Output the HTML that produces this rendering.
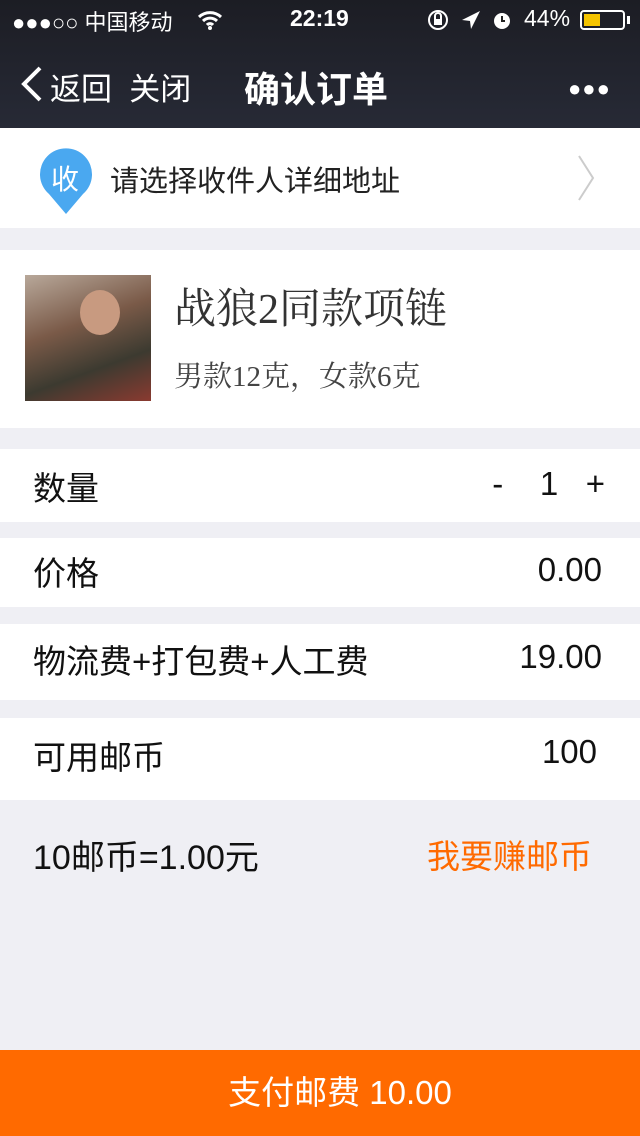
<!DOCTYPE html>
<html><head><meta charset="utf-8"><style>
*{margin:0;padding:0;box-sizing:border-box}
body{width:640px;height:1136px;background:#efeff4;font-family:"Liberation Sans","Noto Sans CJK SC",sans-serif;position:relative;overflow:hidden;color:#111}
.abs{position:absolute}
.hdr{left:0;top:0;width:640px;height:128px;background:linear-gradient(#1c1d24,#272a36);color:#fff}
.row{left:0;width:640px;background:#fff}
.lbl{position:absolute;left:33px;font-size:33px}
.val{position:absolute;right:38px;font-size:33px}
.serif{font-family:"Liberation Serif","Noto Serif CJK SC",serif}
</style></head><body>
<div class="abs hdr">
 <div class="abs" style="left:12px;top:5px;font-size:22px">●●●○○ 中国移动</div>
 <svg class="abs" style="left:197px;top:10px" width="26" height="20" viewBox="0 0 26 20"><path d="M2 7a16 16 0 0 1 22 0M6 11a10 10 0 0 1 14 0M10 15a4 4 0 0 1 6 0" stroke="#fff" stroke-width="3" fill="none"/><circle cx="13" cy="18" r="2" fill="#fff"/></svg>
 <div class="abs" style="left:290px;top:5px;font-size:23px;font-weight:bold">22:19</div>
 <svg class="abs" style="left:426px;top:8px" width="90" height="24" viewBox="0 0 90 24"><circle cx="12" cy="12" r="9" stroke="#fff" stroke-width="2" fill="none"/><rect x="8" y="11" width="8" height="6" fill="#fff"/><path d="M9 11V8a3 3 0 0 1 6 0v3" stroke="#fff" stroke-width="2" fill="none"/><path d="M54 3L36 12l8 1 1 8z" fill="#fff"/><circle cx="76" cy="13" r="8" fill="#fff"/><path d="M76 8v5h3" stroke="#222" stroke-width="2" fill="none"/></svg>
 <div class="abs" style="left:524px;top:5px;font-size:23px">44%</div>
 <div class="abs" style="left:580px;top:10px;width:45px;height:20px;border:2px solid #fff;border-radius:4px"><div style="margin:2px;width:16px;height:12px;background:#f5c400"></div></div>
 <div class="abs" style="left:627px;top:16px;width:3px;height:8px;background:#fff"></div>
 <svg class="abs" style="left:20px;top:66px" width="24" height="36" viewBox="0 0 24 36"><path d="M20 2L4 18l16 16" stroke="#fff" stroke-width="4" fill="none"/></svg>
 <div class="abs" style="left:50px;top:64px;font-size:31px">返回&nbsp; 关闭</div>
 <div class="abs" style="left:244px;top:61px;font-size:36px;font-weight:bold">确认订单</div>
 <div class="abs" style="left:568px;top:76px;font-size:22px;letter-spacing:1px">●●●</div>
</div>
<div class="abs row" style="top:128px;height:100px">
 <svg class="abs" style="left:39px;top:20px" width="54" height="68" viewBox="0 0 54 68"><path d="M27 66L10 46A26 26 0 1 1 44 46Z" fill="#4aa8f0"/></svg>
 <div class="abs" style="left:51px;top:30px;font-size:28px;color:#fff">收</div>
 <div class="abs" style="left:110px;top:30px;font-size:29px;color:#222">请选择收件人详细地址</div>
 <svg class="abs" style="left:576px;top:26px" width="20" height="48" viewBox="0 0 20 48"><path d="M3 2l14 22L3 46" stroke="#ccc" stroke-width="2" fill="none"/></svg>
</div>
<div class="abs row" style="top:250px;height:178px">
 <div class="abs" style="left:25px;top:25px;width:126px;height:126px;background:linear-gradient(160deg,#b8a89a,#7a5a48 40%,#3c3a30 70%,#8a3a30)"></div>
 <div class="abs" style="left:80px;top:40px;width:40px;height:45px;border-radius:50%;background:#c89a80"></div>
 <div class="abs serif" style="left:174px;top:26px;font-size:42px;color:#333">战狼2同款项链</div>
 <div class="abs serif" style="left:174px;top:104px;font-size:29px;color:#444">男款12克，女款6克</div>
</div>
<div class="abs row" style="top:449px;height:73px"><div class="lbl" style="top:13px">数量</div><div class="val" style="top:16px;right:35px">-&nbsp;&nbsp;&nbsp; 1&nbsp;&nbsp; +</div></div>
<div class="abs row" style="top:538px;height:69px"><div class="lbl" style="top:9px">价格</div><div class="val" style="top:13px">0.00</div></div>
<div class="abs row" style="top:624px;height:76px"><div class="lbl" style="top:11px">物流费+打包费+人工费</div><div class="val" style="top:14px">19.00</div></div>
<div class="abs row" style="top:718px;height:82px"><div class="lbl" style="top:13px">可用邮币</div><div class="val" style="top:15px;right:43px">100</div></div>
<div class="abs" style="left:33px;top:830px;font-size:34px">10邮币=1.00元</div>
<div class="abs" style="left:427px;top:830px;font-size:33px;color:#ff6a00">我要赚邮币</div>
<div class="abs" style="left:0;top:1050px;width:640px;height:86px;background:#ff6a00;color:#fff;font-size:33px;text-align:center;line-height:86px;padding-left:40px">支付邮费 10.00</div>
</body></html>
